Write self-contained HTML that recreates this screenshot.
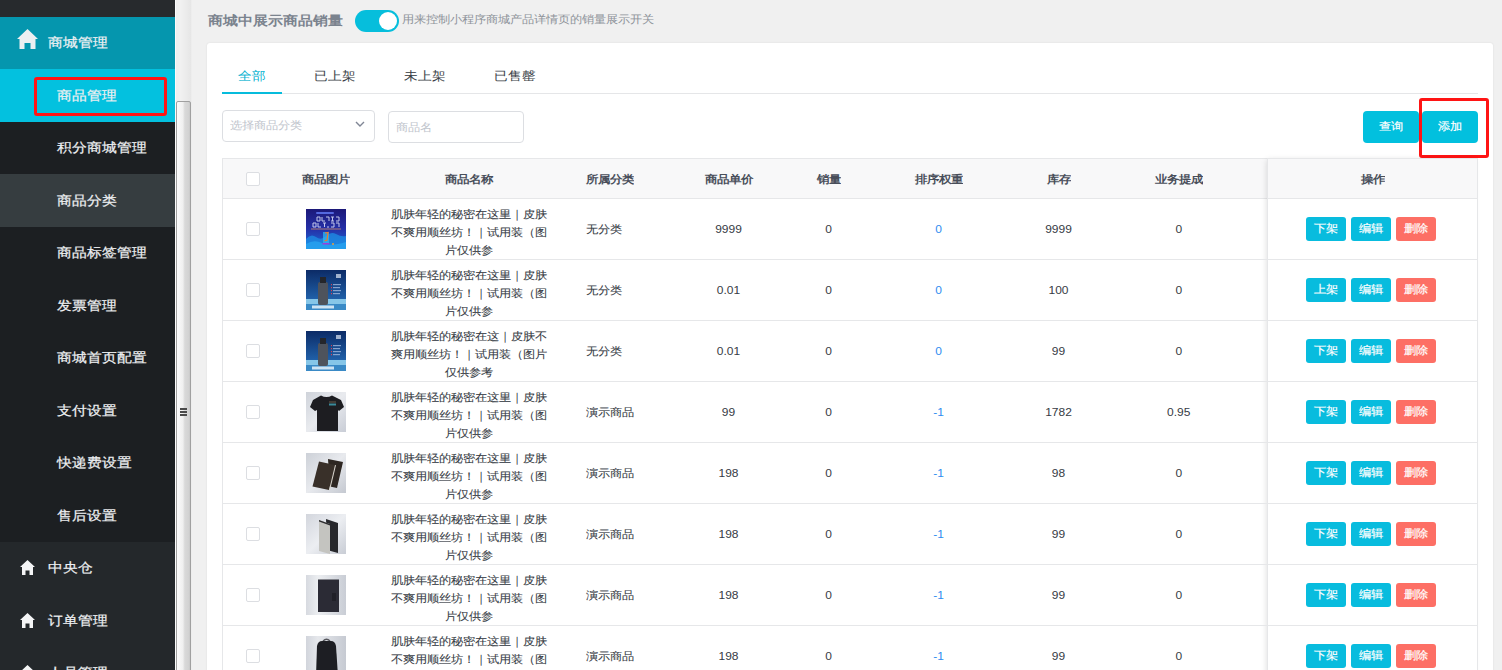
<!DOCTYPE html>
<html><head><meta charset="utf-8">
<style>
*{box-sizing:border-box;margin:0;padding:0}
html,body{width:1502px;height:670px;overflow:hidden;background:#f0f0f0;font-family:"Liberation Sans",sans-serif;position:relative}
.a{position:absolute;white-space:nowrap}
/* sidebar */
#sb{position:absolute;left:0;top:0;width:175px;height:670px;background:#1c1f22;overflow:hidden}
.si{position:absolute;left:0;width:175px;height:52.5px;color:#eef0f2;font-size:15px;line-height:52.5px}
.si span{position:absolute;left:57px;top:0;transform:scaleY(.88);-webkit-text-stroke:.25px currentColor}
.ti span{left:48px}
.house{position:absolute}
/* scrollbar */
#scr{position:absolute;left:175px;top:0;width:17px;height:670px;background:#ededed}
/* main */
.card{position:absolute;left:207px;top:43px;width:1286px;height:660px;background:#fff;border-radius:3px;box-shadow:0 0 2px rgba(0,0,0,.1)}
.tab{position:absolute;top:63px;font-size:14px;line-height:26px;color:#3b3f47;transform:scaleY(.88);-webkit-text-stroke:.05px currentColor}
.box{position:absolute;border:1px solid #dcdee2;border-radius:4px;background:#fff}
.ph{position:absolute;font-size:12px;color:#c0c4cc;line-height:14px;transform:scaleY(.9)}
.btn{position:absolute;background:#02c0de;color:#fff;border-radius:4px;font-size:12px;text-align:center}
.th{position:absolute;font-size:12px;font-weight:bold;color:#484e5a;line-height:14px;top:172px;transform:scaleY(.88)}
.td{position:absolute;font-size:12px;color:#363b44;line-height:14px;transform:scaleY(.9);-webkit-text-stroke:.08px currentColor}
.hl{position:absolute;left:222px;width:1256px;height:1px;background:#e6e7e9}
.ck{position:absolute;left:246px;width:14px;height:14px;border:1px solid #dcdee2;border-radius:2px;background:#fff}
.ob{position:absolute;width:40px;height:24px;border-radius:3px;color:#fff;font-size:12px;line-height:24px;text-align:center;background:#08bcde}
.del{background:#fd6f65}
.sq{display:inline-block;transform:scaleY(.9);position:relative;top:-1px;-webkit-text-stroke:.2px currentColor}
.red{position:absolute;border:3px solid #ff1414;border-radius:3px}
</style></head><body>

<div id="sb">
  <div style="position:absolute;left:0;top:0;width:175px;height:17px;background:#272a2d"></div>
  <div class="si" style="top:17px;height:52px;background:#0596ae;color:#f2f4f5"><svg class="house" style="left:17px;top:12px" width="21" height="20" viewBox="0 0 21 20"><path d="M10.5 0 L21 10 L18.5 10 L18.5 20 L13.5 20 L13.5 14 L7.5 14 L7.5 20 L2.5 20 L2.5 10 L0 10 Z" fill="#eceff1"/></svg></div>
  <div class="a" style="left:48px;top:33px;font-size:15px;line-height:20px;color:#eef1f3;transform:scaleY(.88);-webkit-text-stroke:.25px currentColor">商城管理</div>
  <div class="si" style="top:69px;height:53px;background:#03c1df"><span style="top:0.5px">商品管理</span></div>
  <div class="si" style="top:122px"><span>积分商城管理</span></div>
  <div class="si" style="top:173.5px;height:53.5px;background:#363d40"><span style="top:1px">商品分类</span></div>
  <div class="si" style="top:227px"><span>商品标签管理</span></div>
  <div class="si" style="top:279.5px"><span>发票管理</span></div>
  <div class="si" style="top:332px"><span>商城首页配置</span></div>
  <div class="si" style="top:384.5px"><span>支付设置</span></div>
  <div class="si" style="top:437px"><span>快递费设置</span></div>
  <div class="si" style="top:489.5px"><span>售后设置</span></div>
  <div style="position:absolute;left:0;top:542px;width:175px;height:160px;background:#24282b"></div>
  <div class="si ti" style="top:542px"><svg class="house" style="left:20px;top:18px" width="15" height="15" viewBox="0 0 15 15"><path d="M7.5 0 L15 7 L13 7 L13 15 L9.5 15 L9.5 10.5 L5.5 10.5 L5.5 15 L2 15 L2 7 L0 7 Z" fill="#f4f5f6"/></svg><span>中央仓</span></div>
  <div class="si ti" style="top:594.5px"><svg class="house" style="left:20px;top:18px" width="15" height="15" viewBox="0 0 15 15"><path d="M7.5 0 L15 7 L13 7 L13 15 L9.5 15 L9.5 10.5 L5.5 10.5 L5.5 15 L2 15 L2 7 L0 7 Z" fill="#f4f5f6"/></svg><span>订单管理</span></div>
  <div class="si ti" style="top:647px"><svg class="house" style="left:20px;top:18px" width="15" height="15" viewBox="0 0 15 15"><path d="M7.5 0 L15 7 L13 7 L13 15 L9.5 15 L9.5 10.5 L5.5 10.5 L5.5 15 L2 15 L2 7 L0 7 Z" fill="#f4f5f6"/></svg><span>人员管理</span></div>
  <div class="red" style="left:34px;top:77px;width:133px;height:39px"></div>
</div>

<div id="scr">
  <div style="position:absolute;left:0;top:0;width:1px;height:670px;background:#fbfbfb"></div>
  <div style="position:absolute;left:1px;top:0;width:15px;height:670px;background:linear-gradient(90deg,#efefef,#f1f1f1 30%,#ebebeb 70%,#e6e6e6)"></div>
  <div style="position:absolute;left:1px;top:101px;width:15px;height:640px;border:1px solid #a0a0a0;border-radius:2px;background:linear-gradient(90deg,#fbfbfb,#f0f0f0 45%,#d9d9d9 60%,#d2d2d2 90%,#c8c8c8)"></div>
  <div style="position:absolute;left:5px;top:408px;width:7px;height:2px;background:#4a4a4a;box-shadow:0 3px 0 #4a4a4a,0 6px 0 #4a4a4a"></div>
</div>

<!-- header -->
<div class="a" style="left:208px;top:12px;font-size:15px;font-weight:bold;color:#7b838e;line-height:18px;transform:scaleY(.87);transform-origin:0 10px">商城中展示商品销量</div>
<div class="a" style="left:355px;top:10px;width:44px;height:22px;border-radius:11px;background:#06bedc"></div>
<div class="a" style="left:379px;top:12px;width:18px;height:18px;border-radius:50%;background:#fff"></div>
<div class="a" style="left:402px;top:12px;font-size:12px;color:#8e939a;line-height:14px;transform:scaleY(.9)">用来控制小程序商城产品详情页的销量展示开关</div>

<div class="card"></div>

<!-- tabs -->
<div class="tab" style="left:238px;color:#0cb4d2">全部</div>
<div class="tab" style="left:314px">已上架</div>
<div class="tab" style="left:404px">未上架</div>
<div class="tab" style="left:494px">已售罄</div>
<div class="a" style="left:222px;top:93px;width:1256px;height:1px;background:#e5e6e8"></div>
<div class="a" style="left:222px;top:92px;width:60px;height:2px;background:#06bcdc"></div>

<!-- filters -->
<div class="box" style="left:222px;top:110px;width:153px;height:32px"></div>
<div class="ph" style="left:230px;top:118px">选择商品分类</div>
<svg class="a" style="left:355px;top:121px" width="10" height="7" viewBox="0 0 10 7"><path d="M1 1 L5 5 L9 1" fill="none" stroke="#808695" stroke-width="1.4"/></svg>
<div class="box" style="left:388px;top:111px;width:136px;height:32px"></div>
<div class="ph" style="left:396px;top:120px">商品名</div>

<div class="btn" style="left:1363px;top:111px;width:56px;height:32px;line-height:32px"><span class="sq">查询</span></div>
<div class="btn" style="left:1422px;top:111px;width:56px;height:32px;line-height:32px"><span class="sq">添加</span></div>
<div class="red" style="left:1419px;top:98px;width:70px;height:60px"></div>

<!-- TABLE -->
<div id="tbl">
<div class="a" style="left:222px;top:158px;width:1256px;height:520px;border:1px solid #e6e7e9;border-bottom:none;background:#fff"></div>
<div class="a" style="left:223px;top:159px;width:1254px;height:39px;background:#f8f8f9"></div>
<div class="hl" style="top:198px"></div>
<div class="a" style="left:1267px;top:158px;width:211px;height:520px;box-shadow:-2px 0 6px -2px rgba(0,0,0,.15);border:1px solid #e6e7e9;border-bottom:none;background:#fff"></div>
<div class="a" style="left:1268px;top:159px;width:209px;height:39px;background:#f8f8f9"></div>
<div class="a" style="left:1267px;top:198px;width:211px;height:1px;background:#e6e7e9"></div>
<div class="ck" style="top:172px"></div>
<div class="th" style="left:225.5px;width:200px;text-align:center">商品图片</div>
<div class="th" style="left:368.5px;width:200px;text-align:center">商品名称</div>
<div class="th" style="left:628.5px;width:200px;text-align:center">商品单价</div>
<div class="th" style="left:728.5px;width:200px;text-align:center">销量</div>
<div class="th" style="left:838.5px;width:200px;text-align:center">排序权重</div>
<div class="th" style="left:958.5px;width:200px;text-align:center">库存</div>
<div class="th" style="left:1078.8px;width:200px;text-align:center">业务提成</div>
<div class="th" style="left:1273px;width:200px;text-align:center">操作</div>
<div class="th" style="left:586px">所属分类</div>
<div class="hl" style="top:259px"></div>
<div class="a" style="left:1267px;top:259px;width:211px;height:1px;background:#e6e7e9"></div>
<div class="ck" style="top:222px"></div>
<div class="a" style="left:306px;top:209px;width:40px;height:40px"><svg width="40" height="40" viewBox="0 0 40 40"><defs><linearGradient id="g01" x1="0" y1="0" x2="0" y2="1"><stop offset="0" stop-color="#1c1878"/><stop offset=".5" stop-color="#2530a8"/><stop offset="1" stop-color="#1a70d8"/></linearGradient></defs>
<rect width="40" height="40" fill="url(#g01)"/>
<rect x="10" y="3" width="18" height="2" rx="1" fill="#5468e0"/>
<g fill="none" stroke="#dfe3fa" stroke-width="1" opacity=".85">
<path d="M11 8h3v4h-3zM16 8v4h3M20 8h3v4M25 8h3M26.5 8v4M25 12h3M30 8h3v4h-3"/>
<path d="M7 14h3v4h-3zM12 14v4h3M17 14h3M18.5 14v4M21 18h2M25 14h3v4h-3M30 14h3v4"/>
</g>
<rect x="5" y="19.5" width="30" height="1" fill="#c88a6a" opacity=".85"/>
<path d="M0 30 Q5 24 10 28 T20 27 T30 25 T40 27 L40 40 L0 40Z" fill="#1d8fe6" opacity=".75"/>
<path d="M0 35 Q8 30 16 34 T40 33 L40 40 L0 40Z" fill="#2aa8f2" opacity=".7"/>
<rect x="17" y="23" width="6" height="12" fill="#2fb6f2" opacity=".75"/>
<path d="M19 24 L22 23.5 L21 31 L18.5 32" fill="none" stroke="#f07a2a" stroke-width="1.2"/>
<rect x="16.5" y="34" width="7" height="1.5" fill="#9a3ce0"/>
<circle cx="27" cy="35" r="1" fill="#e0a040"/>
</svg></div>
<div class="td" style="left:368.5px;top:207px;width:200px;text-align:center;">肌肤年轻的秘密在这里｜皮肤</div>
<div class="td" style="left:368.5px;top:225px;width:200px;text-align:center;">不爽用顺丝坊！｜试用装（图</div>
<div class="td" style="left:368.5px;top:243px;width:200px;text-align:center;">片仅供参</div>
<div class="td" style="left:586px;top:222px">无分类</div>
<div class="td" style="left:628.5px;top:222px;width:200px;text-align:center;-webkit-text-stroke:0">9999</div>
<div class="td" style="left:728.5px;top:222px;width:200px;text-align:center;-webkit-text-stroke:0">0</div>
<div class="td" style="left:838.5px;top:222px;width:200px;text-align:center;color:#2d8cf0;-webkit-text-stroke:0">0</div>
<div class="td" style="left:958.5px;top:222px;width:200px;text-align:center;-webkit-text-stroke:0">9999</div>
<div class="td" style="left:1078.8px;top:222px;width:200px;text-align:center;-webkit-text-stroke:0">0</div>
<div class="ob" style="left:1306px;top:217px"><span class="sq">下架</span></div>
<div class="ob" style="left:1351px;top:217px"><span class="sq">编辑</span></div>
<div class="ob del" style="left:1396px;top:217px"><span class="sq">删除</span></div>
<div class="hl" style="top:320px"></div>
<div class="a" style="left:1267px;top:320px;width:211px;height:1px;background:#e6e7e9"></div>
<div class="ck" style="top:283px"></div>
<div class="a" style="left:306px;top:270px;width:40px;height:40px"><svg width="40" height="40" viewBox="0 0 40 40"><defs><linearGradient id="g12" x1="0" y1="0" x2="0" y2="1"><stop offset="0" stop-color="#0c2b66"/><stop offset=".7" stop-color="#1f5ea6"/><stop offset="1" stop-color="#3a86c4"/></linearGradient></defs>
<rect width="40" height="40" fill="url(#g12)"/>
<rect x="0" y="29" width="40" height="5" fill="#86c6e8"/>
<rect x="0" y="34" width="40" height="6" fill="#3a8ac6"/>
<rect x="6" y="35.5" width="22" height="3" fill="#e8f2fa" opacity=".85"/>
<rect x="12" y="12" width="10" height="23" rx="2" fill="#4e535c"/>
<rect x="14" y="7" width="6" height="6" fill="#24262b"/>
<rect x="30" y="4" width="5" height="4" fill="#dfe8f5" opacity=".7"/>
<g fill="#9fb8de" opacity=".8"><rect x="27" y="14" width="8" height="1.2"/><rect x="27" y="17" width="7" height="1.2"/><rect x="27" y="20" width="8" height="1.2"/><rect x="27" y="23" width="7" height="1.2"/></g>
<g fill="#e04050"><rect x="25" y="14" width="1" height="1.2"/><rect x="25" y="17" width="1" height="1.2"/><rect x="25" y="20" width="1" height="1.2"/><rect x="25" y="23" width="1" height="1.2"/></g>
</svg></div>
<div class="td" style="left:368.5px;top:268px;width:200px;text-align:center;">肌肤年轻的秘密在这里｜皮肤</div>
<div class="td" style="left:368.5px;top:286px;width:200px;text-align:center;">不爽用顺丝坊！｜试用装（图</div>
<div class="td" style="left:368.5px;top:304px;width:200px;text-align:center;">片仅供参</div>
<div class="td" style="left:586px;top:283px">无分类</div>
<div class="td" style="left:628.5px;top:283px;width:200px;text-align:center;-webkit-text-stroke:0">0.01</div>
<div class="td" style="left:728.5px;top:283px;width:200px;text-align:center;-webkit-text-stroke:0">0</div>
<div class="td" style="left:838.5px;top:283px;width:200px;text-align:center;color:#2d8cf0;-webkit-text-stroke:0">0</div>
<div class="td" style="left:958.5px;top:283px;width:200px;text-align:center;-webkit-text-stroke:0">100</div>
<div class="td" style="left:1078.8px;top:283px;width:200px;text-align:center;-webkit-text-stroke:0">0</div>
<div class="ob" style="left:1306px;top:278px"><span class="sq">上架</span></div>
<div class="ob" style="left:1351px;top:278px"><span class="sq">编辑</span></div>
<div class="ob del" style="left:1396px;top:278px"><span class="sq">删除</span></div>
<div class="hl" style="top:381px"></div>
<div class="a" style="left:1267px;top:381px;width:211px;height:1px;background:#e6e7e9"></div>
<div class="ck" style="top:344px"></div>
<div class="a" style="left:306px;top:331px;width:40px;height:40px"><svg width="40" height="40" viewBox="0 0 40 40"><defs><linearGradient id="g22" x1="0" y1="0" x2="0" y2="1"><stop offset="0" stop-color="#0c2b66"/><stop offset=".7" stop-color="#1f5ea6"/><stop offset="1" stop-color="#3a86c4"/></linearGradient></defs>
<rect width="40" height="40" fill="url(#g22)"/>
<rect x="0" y="29" width="40" height="5" fill="#86c6e8"/>
<rect x="0" y="34" width="40" height="6" fill="#3a8ac6"/>
<rect x="6" y="35.5" width="22" height="3" fill="#e8f2fa" opacity=".85"/>
<rect x="12" y="12" width="10" height="23" rx="2" fill="#4e535c"/>
<rect x="14" y="7" width="6" height="6" fill="#24262b"/>
<rect x="30" y="4" width="5" height="4" fill="#dfe8f5" opacity=".7"/>
<g fill="#9fb8de" opacity=".8"><rect x="27" y="14" width="8" height="1.2"/><rect x="27" y="17" width="7" height="1.2"/><rect x="27" y="20" width="8" height="1.2"/><rect x="27" y="23" width="7" height="1.2"/></g>
<g fill="#e04050"><rect x="25" y="14" width="1" height="1.2"/><rect x="25" y="17" width="1" height="1.2"/><rect x="25" y="20" width="1" height="1.2"/><rect x="25" y="23" width="1" height="1.2"/></g>
</svg></div>
<div class="td" style="left:368.5px;top:329px;width:200px;text-align:center;">肌肤年轻的秘密在这｜皮肤不</div>
<div class="td" style="left:368.5px;top:347px;width:200px;text-align:center;">爽用顺丝坊！｜试用装（图片</div>
<div class="td" style="left:368.5px;top:365px;width:200px;text-align:center;">仅供参考</div>
<div class="td" style="left:586px;top:344px">无分类</div>
<div class="td" style="left:628.5px;top:344px;width:200px;text-align:center;-webkit-text-stroke:0">0.01</div>
<div class="td" style="left:728.5px;top:344px;width:200px;text-align:center;-webkit-text-stroke:0">0</div>
<div class="td" style="left:838.5px;top:344px;width:200px;text-align:center;color:#2d8cf0;-webkit-text-stroke:0">0</div>
<div class="td" style="left:958.5px;top:344px;width:200px;text-align:center;-webkit-text-stroke:0">99</div>
<div class="td" style="left:1078.8px;top:344px;width:200px;text-align:center;-webkit-text-stroke:0">0</div>
<div class="ob" style="left:1306px;top:339px"><span class="sq">下架</span></div>
<div class="ob" style="left:1351px;top:339px"><span class="sq">编辑</span></div>
<div class="ob del" style="left:1396px;top:339px"><span class="sq">删除</span></div>
<div class="hl" style="top:442px"></div>
<div class="a" style="left:1267px;top:442px;width:211px;height:1px;background:#e6e7e9"></div>
<div class="ck" style="top:405px"></div>
<div class="a" style="left:306px;top:392px;width:40px;height:40px"><svg width="40" height="40" viewBox="0 0 40 40"><defs><linearGradient id="g34" x1="0" y1="0" x2="1" y2="1"><stop offset="0" stop-color="#cfd3da"/><stop offset=".5" stop-color="#e9ebef"/><stop offset="1" stop-color="#c9cdd6"/></linearGradient></defs>
<rect width="40" height="40" fill="url(#g34)"/>
<path d="M15 3.5 Q20.5 6.5 26 3.5 L35 8 L38 15 L33 19 L32 18 L32 39 L11 39 L11 18 L9 19 L4 15 L7 8 Z" fill="#1d1d21"/>
<rect x="23" y="9.5" width="7" height="1" fill="#6a5a48"/><rect x="23" y="11.5" width="7" height="2" fill="#3a8a9a"/>
</svg></div>
<div class="td" style="left:368.5px;top:390px;width:200px;text-align:center;">肌肤年轻的秘密在这里｜皮肤</div>
<div class="td" style="left:368.5px;top:408px;width:200px;text-align:center;">不爽用顺丝坊！｜试用装（图</div>
<div class="td" style="left:368.5px;top:426px;width:200px;text-align:center;">片仅供参</div>
<div class="td" style="left:586px;top:405px">演示商品</div>
<div class="td" style="left:628.5px;top:405px;width:200px;text-align:center;-webkit-text-stroke:0">99</div>
<div class="td" style="left:728.5px;top:405px;width:200px;text-align:center;-webkit-text-stroke:0">0</div>
<div class="td" style="left:838.5px;top:405px;width:200px;text-align:center;color:#2d8cf0;-webkit-text-stroke:0">-1</div>
<div class="td" style="left:958.5px;top:405px;width:200px;text-align:center;-webkit-text-stroke:0">1782</div>
<div class="td" style="left:1078.8px;top:405px;width:200px;text-align:center;-webkit-text-stroke:0">0.95</div>
<div class="ob" style="left:1306px;top:400px"><span class="sq">下架</span></div>
<div class="ob" style="left:1351px;top:400px"><span class="sq">编辑</span></div>
<div class="ob del" style="left:1396px;top:400px"><span class="sq">删除</span></div>
<div class="hl" style="top:503px"></div>
<div class="a" style="left:1267px;top:503px;width:211px;height:1px;background:#e6e7e9"></div>
<div class="ck" style="top:466px"></div>
<div class="a" style="left:306px;top:453px;width:40px;height:40px"><svg width="40" height="40" viewBox="0 0 40 40"><defs><linearGradient id="g45" x1="0" y1="0" x2="1" y2="1"><stop offset="0" stop-color="#cdd1d8"/><stop offset=".5" stop-color="#e8eaee"/><stop offset="1" stop-color="#c5c9d1"/></linearGradient></defs>
<rect width="40" height="40" fill="url(#g45)"/>
<path d="M22 6 L37 9 L31 35 L24 33.5 Z" fill="#2e2722"/>
<path d="M13 8.5 L29 12 L23 37 L6.5 33.5 Z" fill="#393029"/>
<path d="M29 12 L30 12.3 L24 37.2 L23 37Z" fill="#d8d4cc"/>
</svg></div>
<div class="td" style="left:368.5px;top:451px;width:200px;text-align:center;">肌肤年轻的秘密在这里｜皮肤</div>
<div class="td" style="left:368.5px;top:469px;width:200px;text-align:center;">不爽用顺丝坊！｜试用装（图</div>
<div class="td" style="left:368.5px;top:487px;width:200px;text-align:center;">片仅供参</div>
<div class="td" style="left:586px;top:466px">演示商品</div>
<div class="td" style="left:628.5px;top:466px;width:200px;text-align:center;-webkit-text-stroke:0">198</div>
<div class="td" style="left:728.5px;top:466px;width:200px;text-align:center;-webkit-text-stroke:0">0</div>
<div class="td" style="left:838.5px;top:466px;width:200px;text-align:center;color:#2d8cf0;-webkit-text-stroke:0">-1</div>
<div class="td" style="left:958.5px;top:466px;width:200px;text-align:center;-webkit-text-stroke:0">98</div>
<div class="td" style="left:1078.8px;top:466px;width:200px;text-align:center;-webkit-text-stroke:0">0</div>
<div class="ob" style="left:1306px;top:461px"><span class="sq">下架</span></div>
<div class="ob" style="left:1351px;top:461px"><span class="sq">编辑</span></div>
<div class="ob del" style="left:1396px;top:461px"><span class="sq">删除</span></div>
<div class="hl" style="top:564px"></div>
<div class="a" style="left:1267px;top:564px;width:211px;height:1px;background:#e6e7e9"></div>
<div class="ck" style="top:527px"></div>
<div class="a" style="left:306px;top:514px;width:40px;height:40px"><svg width="40" height="40" viewBox="0 0 40 40"><defs><linearGradient id="g56" x1="0" y1="0" x2="1" y2="1"><stop offset="0" stop-color="#d3d6dd"/><stop offset=".5" stop-color="#eceef2"/><stop offset="1" stop-color="#c9cdd5"/></linearGradient></defs>
<rect width="40" height="40" fill="url(#g56)"/>
<path d="M20 5 L32 9 L32 39 L21 36 Z" fill="#27282c"/>
<path d="M13 6 L24 10 L24 40 L13 37 Z" fill="#c4c4c0"/>
<path d="M13 6 L24 10 L24 11.5 L13 7.5Z" fill="#2e2e30"/>
</svg></div>
<div class="td" style="left:368.5px;top:512px;width:200px;text-align:center;">肌肤年轻的秘密在这里｜皮肤</div>
<div class="td" style="left:368.5px;top:530px;width:200px;text-align:center;">不爽用顺丝坊！｜试用装（图</div>
<div class="td" style="left:368.5px;top:548px;width:200px;text-align:center;">片仅供参</div>
<div class="td" style="left:586px;top:527px">演示商品</div>
<div class="td" style="left:628.5px;top:527px;width:200px;text-align:center;-webkit-text-stroke:0">198</div>
<div class="td" style="left:728.5px;top:527px;width:200px;text-align:center;-webkit-text-stroke:0">0</div>
<div class="td" style="left:838.5px;top:527px;width:200px;text-align:center;color:#2d8cf0;-webkit-text-stroke:0">-1</div>
<div class="td" style="left:958.5px;top:527px;width:200px;text-align:center;-webkit-text-stroke:0">99</div>
<div class="td" style="left:1078.8px;top:527px;width:200px;text-align:center;-webkit-text-stroke:0">0</div>
<div class="ob" style="left:1306px;top:522px"><span class="sq">下架</span></div>
<div class="ob" style="left:1351px;top:522px"><span class="sq">编辑</span></div>
<div class="ob del" style="left:1396px;top:522px"><span class="sq">删除</span></div>
<div class="hl" style="top:625px"></div>
<div class="a" style="left:1267px;top:625px;width:211px;height:1px;background:#e6e7e9"></div>
<div class="ck" style="top:588px"></div>
<div class="a" style="left:306px;top:575px;width:40px;height:40px"><svg width="40" height="40" viewBox="0 0 40 40"><defs><linearGradient id="g67" x1="0" y1="0" x2="1" y2="0"><stop offset="0" stop-color="#d7dae0"/><stop offset=".3" stop-color="#eceef1"/><stop offset="1" stop-color="#c9cdd5"/></linearGradient></defs>
<rect width="40" height="40" fill="url(#g67)"/>
<rect x="12" y="4.5" width="21" height="32.5" fill="#2b2b35"/>
<rect x="26" y="18" width="4" height="8" fill="#202028"/>
</svg></div>
<div class="td" style="left:368.5px;top:573px;width:200px;text-align:center;">肌肤年轻的秘密在这里｜皮肤</div>
<div class="td" style="left:368.5px;top:591px;width:200px;text-align:center;">不爽用顺丝坊！｜试用装（图</div>
<div class="td" style="left:368.5px;top:609px;width:200px;text-align:center;">片仅供参</div>
<div class="td" style="left:586px;top:588px">演示商品</div>
<div class="td" style="left:628.5px;top:588px;width:200px;text-align:center;-webkit-text-stroke:0">198</div>
<div class="td" style="left:728.5px;top:588px;width:200px;text-align:center;-webkit-text-stroke:0">0</div>
<div class="td" style="left:838.5px;top:588px;width:200px;text-align:center;color:#2d8cf0;-webkit-text-stroke:0">-1</div>
<div class="td" style="left:958.5px;top:588px;width:200px;text-align:center;-webkit-text-stroke:0">99</div>
<div class="td" style="left:1078.8px;top:588px;width:200px;text-align:center;-webkit-text-stroke:0">0</div>
<div class="ob" style="left:1306px;top:583px"><span class="sq">下架</span></div>
<div class="ob" style="left:1351px;top:583px"><span class="sq">编辑</span></div>
<div class="ob del" style="left:1396px;top:583px"><span class="sq">删除</span></div>
<div class="hl" style="top:686px"></div>
<div class="a" style="left:1267px;top:686px;width:211px;height:1px;background:#e6e7e9"></div>
<div class="ck" style="top:649px"></div>
<div class="a" style="left:306px;top:636px;width:40px;height:40px"><svg width="40" height="40" viewBox="0 0 40 40"><defs><linearGradient id="g78" x1="0" y1="0" x2="1" y2="0"><stop offset="0" stop-color="#d2d5dc"/><stop offset=".3" stop-color="#e6e8ec"/><stop offset="1" stop-color="#c6cad2"/></linearGradient></defs>
<rect width="40" height="40" fill="url(#g78)"/>
<path d="M17 5 Q20.5 1.5 24 5" fill="none" stroke="#55565c" stroke-width="1.4"/>
<path d="M11 10 Q12 5 16 5 L25 5 Q29 5 30 10 L32 40 L10 40 Z" fill="#1d1e23"/>
</svg></div>
<div class="td" style="left:368.5px;top:634px;width:200px;text-align:center;">肌肤年轻的秘密在这里｜皮肤</div>
<div class="td" style="left:368.5px;top:652px;width:200px;text-align:center;">不爽用顺丝坊！｜试用装（图</div>
<div class="td" style="left:368.5px;top:670px;width:200px;text-align:center;">片仅供参</div>
<div class="td" style="left:586px;top:649px">演示商品</div>
<div class="td" style="left:628.5px;top:649px;width:200px;text-align:center;-webkit-text-stroke:0">198</div>
<div class="td" style="left:728.5px;top:649px;width:200px;text-align:center;-webkit-text-stroke:0">0</div>
<div class="td" style="left:838.5px;top:649px;width:200px;text-align:center;color:#2d8cf0;-webkit-text-stroke:0">-1</div>
<div class="td" style="left:958.5px;top:649px;width:200px;text-align:center;-webkit-text-stroke:0">99</div>
<div class="td" style="left:1078.8px;top:649px;width:200px;text-align:center;-webkit-text-stroke:0">0</div>
<div class="ob" style="left:1306px;top:644px"><span class="sq">下架</span></div>
<div class="ob" style="left:1351px;top:644px"><span class="sq">编辑</span></div>
<div class="ob del" style="left:1396px;top:644px"><span class="sq">删除</span></div>
<!--/tbl--></div>

</body></html>
